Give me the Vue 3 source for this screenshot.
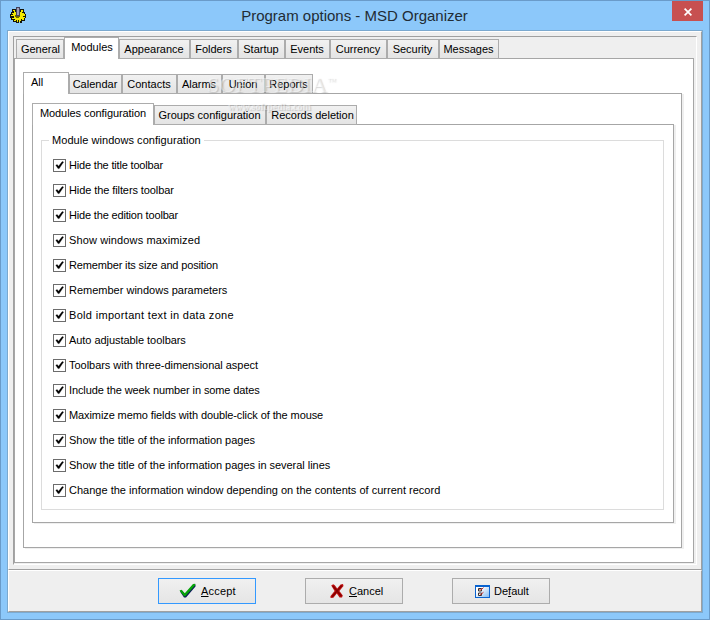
<script setup>
const mainTabs = [
  { label: 'General', w: 48 },
  { label: 'Modules', w: 55, active: true },
  { label: 'Appearance', w: 71 },
  { label: 'Folders', w: 48 },
  { label: 'Startup', w: 47 },
  { label: 'Events', w: 45 },
  { label: 'Currency', w: 57 },
  { label: 'Security', w: 52 },
  { label: 'Messages', w: 60 },
]
const moduleTabs = [
  { label: 'All', w: 46, active: true, start: true },
  { label: 'Calendar', w: 53 },
  { label: 'Contacts', w: 55 },
  { label: 'Alarms', w: 45 },
  { label: 'Union', w: 43 },
  { label: 'Reports', w: 48 },
]
const configTabs = [
  { label: 'Modules configuration', w: 122, active: true },
  { label: 'Groups configuration', w: 112 },
  { label: 'Records deletion', w: 91 },
]
const options = [
  { text: 'Hide the title toolbar', track: -0.18 },
  { text: 'Hide the filters toolbar', track: -0.09 },
  { text: 'Hide the edition toolbar', track: -0.17 },
  { text: 'Show windows maximized', track: 0.13 },
  { text: 'Remember its size and position', track: -0.15 },
  { text: 'Remember windows parameters', track: 0 },
  { text: 'Bold important text in data zone', track: 0.32 },
  { text: 'Auto adjustable toolbars', track: -0.05 },
  { text: 'Toolbars with three-dimensional aspect', track: -0.03 },
  { text: 'Include the week number in some dates', track: -0.1 },
  { text: 'Maximize memo fields with double-click of the mouse', track: -0.1 },
  { text: 'Show the title of the information pages', track: -0.03 },
  { text: 'Show the title of the information pages in several lines', track: -0.03 },
  { text: 'Change the information window depending on the contents of current record', track: 0.01 },
]
</script>

<template>
  <div class="window">
    <header class="titlebar">
      <svg class="gear" width="16" height="16" viewBox="0 0 16 16" shape-rendering="crispEdges">
        <path d="M2 2h4v1h4V2h4v3h1v2h1v4h-1v3h-3v2h-2v-1H9v1H6v-1H3v-2H1v-2H0V7h1V5h1z" fill="#15150a" />
        <path d="M3 3h2v2h1v2h3V5h2V3h2v2h-1v1h2v1h1v2h-2v1h2v1h-1v2h-2v-1h-1v2h-1v1H9v-2H8v2H7v-2H6v1H4v-1h1v-1H2v-1h2V9H1V8h2V7H2V6h2V4H3z" fill="#f4ea00" />
        <path d="M5 8h1v1h3V8h1v2H9v1H6v-1H5z" fill="#6d6500" />
        <path d="M6 0h4v9H6z" fill="#44425c" />
        <path d="M7 1h2v7H7z" fill="#a2a0b8" />
      </svg>
      <h1>Program options - MSD Organizer</h1>
      <button class="close" aria-label="Close">
        <svg width="8" height="8" viewBox="0 0 8 8"><path d="M.6 .6 7.4 7.4M7.4 .6 .6 7.4" stroke="#fff" stroke-width="1.7" /></svg>
      </button>
    </header>

    <main class="client">
      <section class="upper">
        <div class="bevel">
          <nav class="tabs main-tabs">
            <div v-for="t in mainTabs" :key="t.label" class="tab" :class="{ active: t.active }" :style="{ width: t.w + 'px' }"><span>{{ t.label }}</span></div>
          </nav>
          <div class="page main-page">
            <nav class="tabs">
              <div v-for="t in moduleTabs" :key="t.label" class="tab" :class="{ active: t.active, start: t.start }" :style="{ width: t.w + 'px' }"><span>{{ t.label }}</span></div>
            </nav>
            <div class="page module-page">
              <nav class="tabs config-tabs">
                <div v-for="t in configTabs" :key="t.label" class="tab" :class="{ active: t.active }" :style="{ width: t.w + 'px' }"><span>{{ t.label }}</span></div>
              </nav>
              <div class="page config-page">
                <div class="group">
                  <div class="legend"><span>Module windows configuration</span></div>
                  <div class="options">
                    <label v-for="o in options" :key="o.text" class="option">
                      <svg width="13" height="13" viewBox="0 0 13 13">
                        <rect x=".5" y=".5" width="12" height="12" fill="#fff" stroke="#6c6c6c" />
                        <path d="M2.8 6.2 4.2 5.6 5.5 7.2 9.2 2.6 10.6 3 6.2 9.6H5z" fill="#000" stroke="#000" stroke-width=".3" />
                      </svg>
                      <span :style="{ letterSpacing: o.track + 'px' }">{{ o.text }}</span>
                    </label>
                  </div>
                </div>
              </div>
            </div>
          </div>
        </div>
      </section>

      <footer class="lower">
        <button class="btn primary">
          <svg width="17" height="16" viewBox="0 0 17 16">
            <path d="M1 8.5 3 7.5 6 11 14.5 1.5 16.5 1.5V3.5L7 14.5H5z" fill="#0b1a5a" />
            <path d="M.5 7.5 2.5 6.8 5.8 10.2 14 1 16.2.8V2.2L6.3 13.3H5z" fill="#06a30a" />
          </svg>
          <span><u>A</u>ccept</span>
        </button>
        <button class="btn cancel">
          <svg width="14" height="16" viewBox="0 0 14 16">
            <path d="M1.2 2.4 3.2 1.2 4.8 2.2 7.2 5.6 10.6 1.4 13 1 13.5 3 9.4 8 12.8 12.6 12 14.4H9.6L6.8 10.6 3.4 14.8.6 15 .4 13.2 4.6 8z" fill="#c01010" />
            <path d="M3 3 11.4 13.2M11.8 2.4 2 13.8" stroke="#860000" stroke-width="1.6" />
          </svg>
          <span><u>C</u>ancel</span>
        </button>
        <button class="btn default">
          <svg width="15" height="13" viewBox="0 0 15 13">
            <defs><linearGradient id="sheet" x1="0" y1="0" x2="1" y2="1"><stop offset=".3" stop-color="#fff" /><stop offset="1" stop-color="#7fb8f2" /></linearGradient></defs>
            <rect x=".5" y=".5" width="14" height="12" fill="url(#sheet)" stroke="#0a63d0" />
            <path d="M0 0h15v2H0z" fill="#0a63d0" />
            <path d="M3.5 3.5h3v2.5h-3zM3.5 8h3v2.5h-3z" fill="#fff" stroke="#333" />
            <path d="M4.5 4 5.6 5.2 8.5 2.6M4.5 8.6 5.6 9.7 8.5 7.2" fill="none" stroke="#d02a20" />
          </svg>
          <span>De<u>f</u>ault</span>
        </button>
      </footer>
    </main>

    <div class="watermark" aria-hidden="true">
      <div class="mark">SOFTPEDIA<sup>™</sup></div>
      <div class="site">www.softpedia.com</div>
    </div>
  </div>
</template>

<style>
body { margin: 0; }
</style>

<style scoped>
* { box-sizing: border-box; }
.window {
  position: relative;
  width: 710px;
  height: 620px;
  padding: 0 6px 6px 6px;
  border: 1px solid #6a9bc9;
  background: #8cc8fa;
  font: 11px/13px "Liberation Sans", Arial, sans-serif;
  color: #000;
  overflow: hidden;
}
.titlebar {
  display: grid;
  grid-template-columns: 31px 1fr 31px;
  height: 29px;
}
.gear { margin: 6px 0 0 3px; }
h1 {
  margin: 5px 0 0;
  padding-right: 1px;
  font-size: 15px;
  font-weight: 400;
  line-height: 20px;
  text-align: center;
  color: #222c35;
}
.close {
  display: flex;
  align-items: center;
  justify-content: center;
  width: 31px;
  height: 20px;
  padding: 1px 0 0 1px;
  border: 0;
  background: #c75050;
}
.client {
  height: 583px;
  border: 1px solid #7ba9cf;
  background: #efefef;
}
.upper {
  height: 539px;
  padding: 4px;
  border: 1px solid #fff;
  border-right-color: #a0a0a0;
  border-bottom-color: #a0a0a0;
}
.bevel {
  height: 529px;
  border: 1px solid #a0a0a0;
  border-right-color: #fff;
  border-bottom-color: #fff;
  padding: 0 2px 1px 0;
}
.tabs {
  display: flex;
  align-items: flex-end;
  height: 22px;
  margin-bottom: -1px;
}
.main-tabs { padding-left: 2px; }
.tab {
  flex: none;
  display: flex;
  justify-content: center;
  height: 20px;
  padding: 3px 1px 0 0;
  border: 1px solid #acacac;
  background: linear-gradient(#f1f1f1, #e4e4e4);
  white-space: nowrap;
}
.main-tabs .tab:first-child { padding: 3px 0 0 1px; }
.main-tabs .active { padding: 3px 0 0 1px; }
.tab.active {
  height: 22px;
  padding-right: 0;
  border-bottom: 0;
  background: #fff;
}
.config-tabs .tab:last-child { padding: 3px 0 0 2px; }
.tab.start { justify-content: flex-start; padding-left: 7px; }
.page { border: 1px solid #a6a6a6; background: #fff; }
.main-page { height: 505px; padding: 13px 8px 0 8px; }
.module-page {
  width: 659px;
  height: 455px;
  padding: 9px 7px 0 8px;
  box-shadow: 2px 1px 0 #efefef;
}
.config-page {
  width: 642px;
  height: 399px;
  padding: 10px 9px 0 8px;
  box-shadow: 2px 1px 0 #efefef;
}
.config-tabs .active { letter-spacing: -0.07px; }
.group {
  width: 623px;
  height: 375px;
  display: flex;
  flex-direction: column;
  background: linear-gradient(#dcdcdc, #dcdcdc) 0 5px / 100% 1px no-repeat;
}
.legend { height: 13px; padding-left: 8px; margin-top: -1px; letter-spacing: 0.05px; }
.legend span { display: inline-block; padding: 0 3px; background: #fff; }
.options {
  flex: 1;
  margin-top: -6px;
  padding: 12px 0 0 11px;
  border: 1px solid #dcdcdc;
  border-top: 0;
}
.option { display: flex; align-items: center; gap: 3px; height: 25px; white-space: nowrap; }
.lower {
  display: flex;
  gap: 49px;
  height: 42px;
  padding: 7px 0 0 149px;
  border: 1px solid #fff;
  border-right-color: #a0a0a0;
  border-bottom-color: #a0a0a0;
}
.btn {
  display: flex;
  align-items: center;
  gap: 5px;
  width: 98px;
  height: 26px;
  padding: 0 0 0 20px;
  border: 1px solid #acacac;
  background: linear-gradient(#f0f0f0, #e5e5e5);
  font: 11px/13px "Liberation Sans", Arial, sans-serif;
  color: #000;
}
.btn.primary { border-color: #3399ff; letter-spacing: 0.2px; }
.btn.cancel { padding-left: 24px; }
.btn.default { padding-left: 22px; gap: 4px; }
.watermark {
  position: absolute;
  left: 206px;
  top: 72px;
  pointer-events: none;
  font-family: "Liberation Serif", serif;
  color: rgba(255, 255, 255, 0.45);
  text-shadow: 1px 1px 1px rgba(120, 120, 120, 0.32);
  white-space: nowrap;
}
.mark { font-size: 22px; line-height: 23px; letter-spacing: 0.2px; }
.mark sup { font-size: 9px; line-height: 0; }
.site { padding-left: 21px; margin-top: 5px; font: bold 10px/12px "Liberation Serif", serif; }
</style>
